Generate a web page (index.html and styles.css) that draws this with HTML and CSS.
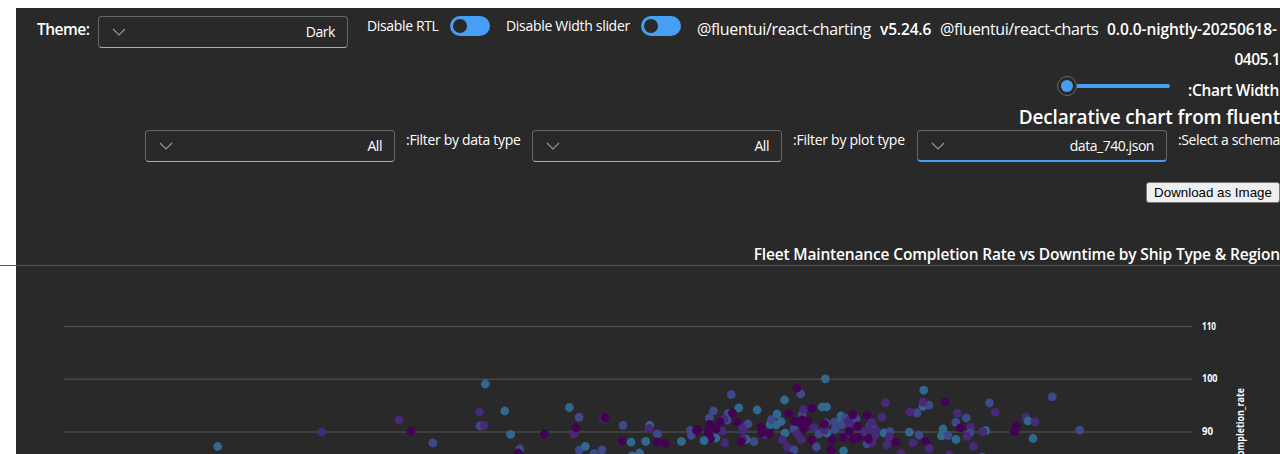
FILE: index.html
```html
<!DOCTYPE html>
<html lang="en">
<head>
<meta charset="utf-8">
<title>Declarative chart</title>
<link rel="stylesheet" href="styles.css">
</head>
<body>
<main class="panel">
  <header class="toolbar">
    <span class="strong theme-label">Theme:</span>
    <div class="dropdown"><svg class="chevron" viewBox="0 0 14 8"><path d="M1 1l6 6 6-6"/></svg><span class="value">Dark</span></div>
    <span class="label rtl-label">Disable RTL</span>
    <span class="switch"></span>
    <span class="label width-label">Disable Width slider</span>
    <span class="switch"></span>
    <div class="packages">
      <span class="package charting">@fluentui/react-charting</span>
      <span class="strong version">v5.24.6</span>
      <span class="package charts">@fluentui/react-charts</span>
      <span class="strong nightly">0.0.0-nightly-20250618-</span>
    </div>
  </header>
  <div class="version-rest"><span class="strong rest">0405.1</span></div>
  <div class="width-row">
    <div class="slider"><span class="thumb"></span><span class="rail"></span></div>
    <span class="strong chart-width">:Chart Width</span>
  </div>
  <h1 class="heading"><span>Declarative chart from fluent</span></h1>
  <div class="filters">
    <div class="dropdown"><svg class="chevron" viewBox="0 0 14 8"><path d="M1 1l6 6 6-6"/></svg><span class="value">All</span></div>
    <span class="label data-label">:Filter by data type</span>
    <div class="dropdown"><svg class="chevron" viewBox="0 0 14 8"><path d="M1 1l6 6 6-6"/></svg><span class="value">All</span></div>
    <span class="label plot-label">:Filter by plot type</span>
    <div class="dropdown active"><svg class="chevron" viewBox="0 0 14 8"><path d="M1 1l6 6 6-6"/></svg><span class="value json">data_740.json</span></div>
    <span class="label schema-label">:Select a schema</span>
  </div>
  <div class="actions"><button class="download">Download as Image</button></div>
  <h2 class="chart-title"><span>Fleet Maintenance Completion Rate vs Downtime by Ship Type &amp; Region</span></h2>
  <div class="divider"></div>
  <svg class="chart" viewBox="16 266 1264 188" width="1264" height="188">
    <rect class="grid" x="64" y="326" width="1128" height="1"/>
    <rect class="grid" x="64" y="378.65" width="1128" height="1"/>
    <rect class="grid" x="64" y="431.5" width="1128" height="1"/>
    <g id="points"></g>
    <text class="tick" x="1202" y="330" textLength="14" lengthAdjust="spacingAndGlyphs">110</text>
    <text class="tick" x="1202" y="382" textLength="15.5" lengthAdjust="spacingAndGlyphs">100</text>
    <text class="tick" x="1202" y="435" textLength="11" lengthAdjust="spacingAndGlyphs">90</text>
    <text class="tick axis" transform="translate(1244 460.5) rotate(-90)" textLength="72.5" lengthAdjust="spacingAndGlyphs">completion_rate</text>
  </svg>
</main>
<script src="chart.js"></script>
</body>
</html>
```

FILE: styles.css
```css
* { box-sizing: border-box; }
html, body { overflow: hidden; }
body {
  margin: 0;
  background: #fff;
  color: #fff;
  font-family: "Open Sans", "Noto Sans", sans-serif;
}
.panel {
  margin: 8px 0 0 16px;
  height: 446px;
  background: #292929;
  display: flex;
  flex-direction: column;
  white-space: nowrap;
}
.toolbar { display: flex; height: 37px; padding: 8px 0 0 21px; flex: none; }
.strong { font-size: 15.5px; font-weight: 650; line-height: 28px; }
.label { font-size: 14px; line-height: 20px; flex: none; }
.theme-label { width: 61px; flex: none; letter-spacing: -0.5px; line-height: 27px; }
.dropdown {
  width: 250px;
  height: 32px;
  flex: none;
  display: flex;
  align-items: center;
  justify-content: space-between;
  padding: 0 12px 0 13px;
  border: 1px solid #666;
  border-bottom-color: #adadad;
  border-radius: 4px;
}
.dropdown.active { border-bottom: 2px solid #479ef5; }
.chevron { width: 14px; height: 8px; fill: none; stroke: #999; stroke-width: 1.1; }
.value { font-size: 14px; line-height: 20px; letter-spacing: -0.45px; }
.rtl-label { width: 83px; margin-left: 19px; letter-spacing: -0.35px; }
.width-label { width: 135px; margin-left: 16px; letter-spacing: -0.3px; }
.switch {
  width: 40px;
  height: 20px;
  flex: none;
  padding: 3px 0 0 3px;
  border-radius: 10px;
  background: #479ef5;
}
.switch::before { content: ""; display: block; width: 14px; height: 14px; border-radius: 50%; background: #292929; }
.packages { display: flex; margin-left: 16px; line-height: 27px; font-size: 16px; }
.packages .strong { line-height: 27px; }
.package { flex: none; }
.charting { width: 183px; letter-spacing: -0.33px; }
.version { width: 60px; flex: none; letter-spacing: -0.15px; }
.charts { width: 167px; letter-spacing: -0.4px; }
.nightly { width: 173px; flex: none; letter-spacing: -0.1px; }
.version-rest { height: 30px; flex: none; display: flex; justify-content: flex-end; }
.rest { letter-spacing: -0.5px; }
.chart-width { letter-spacing: -0.28px; }
.width-row { height: 30px; flex: none; display: flex; justify-content: flex-end; padding-top: 1px; }
.slider { display: flex; align-items: center; width: 113px; height: 20px; margin: 0 18px 0 0; }
.chart-width { width: 92px; flex: none; }
.thumb { width: 20px; height: 20px; flex: none; border: 1px solid #666; border-radius: 50%; padding: 3px; }
.thumb::before { content: ""; display: block; width: 12px; height: 12px; border-radius: 50%; background: #479ef5; }
.rail { flex: 1; height: 4px; border-radius: 0 2px 2px 0; background: #479ef5; }
.heading { margin: 0; height: 25px; flex: none; font-size: 19px; font-weight: 600; line-height: 24px; letter-spacing: -0.18px; text-align: right; }
.filters { display: flex; justify-content: flex-end; height: 52px; flex: none; }
.data-label { width: 126px; margin-left: 11px; letter-spacing: -0.3px; }
.plot-label { width: 124px; margin-left: 11px; letter-spacing: -0.26px; }
.schema-label { width: 102px; margin-left: 11px; letter-spacing: -0.37px; }
.actions { height: 62px; flex: none; display: flex; justify-content: flex-end; align-items: flex-start; }
.download {
  width: 134px;
  height: 21px;
  padding: 0;
  border: 1px solid #767676;
  border-radius: 3px;
  background: #efefef;
  color: #000;
  font: 13.333px "Liberation Sans", Arial, sans-serif;
}
.chart-title { margin: 0; height: 21px; flex: none; font-size: 15.5px; font-weight: 600; line-height: 21px; letter-spacing: -0.16px; text-align: right; }
.divider { height: 1px; flex: none; margin-left: -16px; background: #575757; }
.chart { display: block; flex: none; }
.grid { fill: #575757; }
.tick { fill: #fff; font-size: 10px; font-weight: 700; }
```

FILE: chart.js
```js
const colors = { t: "#31688e", b: "#3e4989", p: "#482878", d: "#440154" };
const points = `t217.7,446.5 p321.8,432 p399,419.8 d410.8,431.2 b432.8,443
t485.3,384 p479.4,412 t504.8,411 b480,426 p484,425.4 t510.6,434.3 d544.4,433.8
t569.4,407.5 b579,417.3 p574,433.8 d576,427.8 p603.5,418.5 d604.8,417.8 b623,425.3
d622,441 t631,442.2 b519.7,449 d518,453 b579.3,450 t585.3,446.3 b594,453.5 b602,450
t649.6,425.5 p649,428.5 b657.4,434 t632,456 t639.5,453 t645.7,441.3 d657,442.2 d665.3,443.5
t681.4,441.3 b690.4,430.5 b691.3,435.5 d696.5,430.5 d698,429.3 b731.3,394.7 b713.3,411
t738.8,407.8 t757.2,410 b709.4,418 b728,413.5 d732.4,413 d709.7,424.5 b727,420 p724,419.5
d720,422 b748,424 p742,427 p743.5,430.5 d737,422 p722,431 d716,429 d708,432.5 t716,438
d710.5,438.5 t704,440.7 p724.7,443 t746,439.5 p743,439.5 d741,441.3 b754,441.7
t825.4,378.8 b800.7,394 d796.8,388.2 t784.6,400 t822,407 t826.5,407 p885.5,402.7
b802,415 p803.7,409.3 d811.8,408.3 d788.7,413.5 t777,414 t770,424.5 t776,425 t781,421.5
b771.5,419.5 t785,433.2 b794,428.5 d794.5,421.5 d802,420 d798,422 d808,421 d803,425.5
d803.5,429 p797,434 p801,439.5 p765,434.5 d761,427 d762,432.5 d769.7,433.5 p782.4,440
p787,447 b794,450 d791,457 d811.5,440.3 b816.5,447 p813.8,428 b819,434 t827,433 p824.5,430
b826,423 d824.3,424 b834.5,422 b835,429.5 d832,440 d831,450 t843.5,451 t841,416 t842,420
b845,418 b842,425 b856,419 p848,421 p850,424 d852.8,414.8 d857.7,426 p846,434.5
d849.4,431.3 d843.3,437.5 d853,439 d858.5,437.5 p864.5,432 d866.8,415.3 t870,426 b873,428
p871.7,422.5 p869,428.5 p882,417.2 p876.5,431 p875,435.5 b867,444 p872,443 d868.5,439
t884,433 b890,431.5 p889.5,437 p887,445 d895.8,442 t923.8,390.2 t923,406.3 b929,405.2
p922.8,402.2 d944.8,401.8 b917,413 p910,412 p957.6,413.3 b989.5,402.8 p995.3,412.3
b1052.3,396.8 p1025.8,417 t1028,421 p1035,421.8 d1016.5,426 d1014.3,431.7 b1079.7,430.2
t1033,438.5 b966.3,418 b955.8,422.5 d960.3,428 t943,429 t941.5,435.8 b948,435.5 t956,439.5
p970.7,427.3 b970,433 p967,436.5 t985.7,430.5 p982.8,431.7 t909.4,432.2 b919,435
p913,442.8 d925.6,441.3 p929,448.5 p973.4,446.5 p949,455 b982,457 p901,453.5`;

const layer = document.getElementById("points");
for (const point of points.split(/\s+/)) {
  const [x, y] = point.slice(1).split(",");
  const dot = document.createElementNS("http://www.w3.org/2000/svg", "circle");
  dot.setAttribute("cx", x);
  dot.setAttribute("cy", y);
  dot.setAttribute("r", 4.4);
  dot.setAttribute("fill", colors[point[0]]);
  layer.append(dot);
}
```
